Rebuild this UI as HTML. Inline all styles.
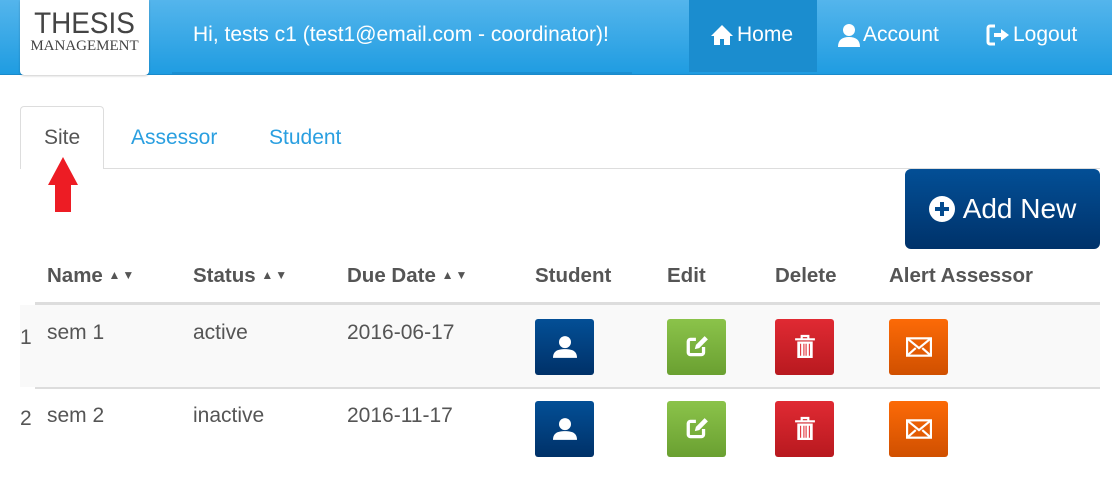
<!DOCTYPE html>
<html><head><meta charset="utf-8"><style>
*{margin:0;padding:0;box-sizing:border-box}
body{width:1112px;height:477px;background:#fff;font-family:"Liberation Sans",Arial,sans-serif;position:relative;overflow:hidden;color:#555}
.abs{position:absolute}
.hdr{left:0;top:0;width:1112px;height:75px;background:linear-gradient(#54b5ec,#1f9ce1);border-bottom:1px solid #1a8acb}
.logo{left:20px;top:0;width:129px;height:75px;background:#fff;border-radius:0 0 4px 4px;box-shadow:0 1px 2px rgba(0,0,0,.2);text-align:center}
.greet{left:172px;top:0;width:460px;height:74px;border-bottom:2px solid #1b8fd2}
.nav{color:#fff;font-size:21px;top:22px;display:flex;align-items:center;gap:3px;height:26px}
.home{left:689px;top:0;width:128px;height:72px;background:#1b8dcf}
.tabs{left:20px;top:168px;width:1080px;height:1px;background:#ddd}
.tab{left:20px;top:106px;width:84px;height:63px;border:1px solid #ddd;border-bottom:none;border-radius:4px 4px 0 0;background:#fff}
.tt{font-size:21px;top:126px}
.th{font-size:20.5px;font-weight:bold;top:264px;color:#555}
.sort{font-size:12px;font-weight:normal;letter-spacing:2px;vertical-align:3px}
.td{font-size:21px;top:321px;color:#555}
.btn{width:59px;height:56px;border-radius:3px;display:flex;align-items:center;justify-content:center}
.b1{background:linear-gradient(#034f96,#003168)}
.b2{background:linear-gradient(#8bc34a,#6aa031)}
.b3{background:linear-gradient(#e02a33,#b8191f)}
.b4{background:linear-gradient(#fc6a07,#d05000)}
</style></head><body>
<div class="abs hdr"></div>
<div class="abs greet"></div>
<div class="abs home"></div>
<div class="abs logo">
<div style="font-size:30px;color:#444;margin-top:10px;line-height:28px;transform:scaleX(.93)">THESIS</div>
<div style="font-family:'Liberation Serif',serif;font-size:15px;color:#444;line-height:17px">MANAGEMENT</div>
</div>
<div class="abs" style="left:193px;top:23px;color:#fff;font-size:21px">Hi, tests c1 (test1@email.com - coordinator)!</div>
<div class="abs nav" style="left:710px"><svg width="24" height="22" viewBox="0 0 24 22"><path d="M12 1L1 12h3v9h6v-6h4v6h6v-9h3z" fill="#fff"/></svg>Home</div>
<div class="abs nav" style="left:838px"><svg width="22" height="24" viewBox="0 0 22 24"><circle cx="11" cy="7" r="6" fill="#fff"/><path d="M0 24c0-7 4-10 11-10s11 3 11 10z" fill="#fff"/></svg>Account</div>
<div class="abs nav" style="left:986px"><svg width="24" height="22" viewBox="0 0 24 22"><path d="M9 2H4a2 2 0 0 0-2 2v14a2 2 0 0 0 2 2h5" stroke="#fff" stroke-width="3" fill="none"/><path d="M8 9h7V5l8 6-8 6v-4H8z" fill="#fff"/></svg>Logout</div>

<div class="abs tabs"></div>
<div class="abs tab"></div>
<div class="abs tt" style="left:44px;color:#555">Site</div>
<div class="abs tt" style="left:131px;color:#2a9fe0">Assessor</div>
<div class="abs tt" style="left:269px;color:#2a9fe0">Student</div>
<svg class="abs" style="left:47px;top:155px" width="32" height="58" viewBox="0 0 32 58"><path d="M16 2L31 30H24V57H8V30H1Z" fill="#ed1c24"/></svg>

<div class="abs" style="left:905px;top:169px;width:195px;height:80px;border-radius:6px;background:linear-gradient(#034f96,#00326a);color:#fff;font-size:28px;display:flex;align-items:center;justify-content:center;gap:8px"><svg width="26" height="26" viewBox="0 0 26 26"><circle cx="13" cy="13" r="13" fill="#fff"/><path d="M13 6v14M6 13h14" stroke="#034a8e" stroke-width="4"/></svg>Add New</div>

<div class="abs th" style="left:47px">Name <span class="sort">▲▼</span></div>
<div class="abs th" style="left:193px">Status <span class="sort">▲▼</span></div>
<div class="abs th" style="left:347px">Due Date <span class="sort">▲▼</span></div>
<div class="abs th" style="left:535px">Student</div>
<div class="abs th" style="left:667px">Edit</div>
<div class="abs th" style="left:775px">Delete</div>
<div class="abs th" style="left:889px">Alert Assessor</div>

<div class="abs" style="left:20px;top:305px;width:1080px;height:82px;background:#f9f9f9"></div>
<div class="abs" style="left:35px;top:302px;width:1065px;height:3px;background:#ddd"></div>
<div class="abs" style="left:35px;top:387px;width:1065px;height:2px;background:#ddd"></div>

<div class="abs td" style="left:20px;top:326px">1</div>
<div class="abs td" style="left:47px">sem 1</div>
<div class="abs td" style="left:193px">active</div>
<div class="abs td" style="left:347px">2016-06-17</div>
<div class="abs td" style="left:20px;top:407px">2</div>
<div class="abs td" style="left:47px;top:404px">sem 2</div>
<div class="abs td" style="left:193px;top:404px">inactive</div>
<div class="abs td" style="left:347px;top:404px">2016-11-17</div>

<div class="abs btn b1" style="left:535px;top:319px"><svg width="24" height="24" viewBox="0 0 22 22"><circle cx="11" cy="6.5" r="5.5" fill="#fff"/><path d="M0 21c0-6 4-8 11-8s11 2 11 8z" fill="#fff"/></svg></div>
<div class="abs btn b2" style="left:667px;top:319px"><svg width="24" height="24" viewBox="0 0 22 22"><path d="M10 4H5a2 2 0 0 0-2 2v10a2 2 0 0 0 2 2h10a2 2 0 0 0 2-2v-5" stroke="#fff" stroke-width="3" fill="none"/><path d="M9 13l1-4 8-8 3 3-8 8z" fill="#fff"/></svg></div>
<div class="abs btn b3" style="left:775px;top:319px"><svg width="22" height="26" viewBox="0 0 20 22"><path d="M1 4h18M7 4V1h6v3" stroke="#fff" stroke-width="2" fill="none"/><path d="M3 6h14v15H3z" fill="#fff"/><path d="M6 8v11M9 8v11M11 8v11M14 8v11" stroke="#e0323a" stroke-width="1"/></svg></div>
<div class="abs btn b4" style="left:889px;top:319px"><svg width="26" height="20" viewBox="0 0 24 18"><rect x="1" y="1" width="22" height="16" fill="none" stroke="#fff" stroke-width="2"/><path d="M1 1l11 9 11-9M1 17l8-7M23 17l-8-7" stroke="#fff" stroke-width="2" fill="none"/></svg></div>

<div class="abs btn b1" style="left:535px;top:401px"><svg width="24" height="24" viewBox="0 0 22 22"><circle cx="11" cy="6.5" r="5.5" fill="#fff"/><path d="M0 21c0-6 4-8 11-8s11 2 11 8z" fill="#fff"/></svg></div>
<div class="abs btn b2" style="left:667px;top:401px"><svg width="24" height="24" viewBox="0 0 22 22"><path d="M10 4H5a2 2 0 0 0-2 2v10a2 2 0 0 0 2 2h10a2 2 0 0 0 2-2v-5" stroke="#fff" stroke-width="3" fill="none"/><path d="M9 13l1-4 8-8 3 3-8 8z" fill="#fff"/></svg></div>
<div class="abs btn b3" style="left:775px;top:401px"><svg width="22" height="26" viewBox="0 0 20 22"><path d="M1 4h18M7 4V1h6v3" stroke="#fff" stroke-width="2" fill="none"/><path d="M3 6h14v15H3z" fill="#fff"/><path d="M6 8v11M9 8v11M11 8v11M14 8v11" stroke="#e0323a" stroke-width="1"/></svg></div>
<div class="abs btn b4" style="left:889px;top:401px"><svg width="26" height="20" viewBox="0 0 24 18"><rect x="1" y="1" width="22" height="16" fill="none" stroke="#fff" stroke-width="2"/><path d="M1 1l11 9 11-9M1 17l8-7M23 17l-8-7" stroke="#fff" stroke-width="2" fill="none"/></svg></div>
</body></html>
